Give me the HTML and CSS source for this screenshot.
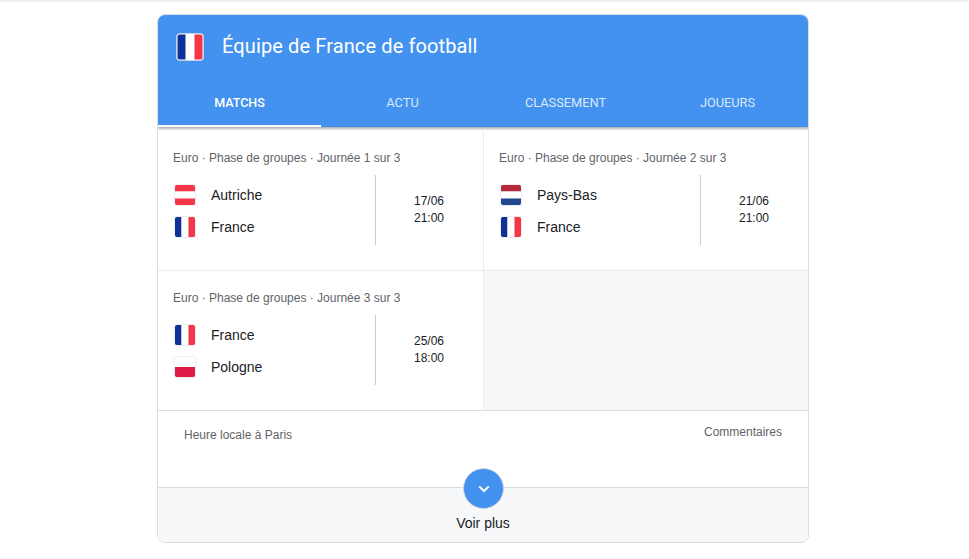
FILE: index.html
```html
<!DOCTYPE html>
<html lang="fr">
<head>
<meta charset="utf-8">
<title>Équipe de France de football</title>
<link rel="stylesheet" href="styles.css">
</head>
<body>
<svg class="defs" width="0" height="0" aria-hidden="true">
  <symbol id="fr" viewBox="0 0 22 22"><rect width="22" height="22" rx="2.5" fill="#eceef1"/><path d="M3 1h4.5v20H3a2 2 0 0 1-2-2V3a2 2 0 0 1 2-2z" fill="#0f3197"/><rect x="7.5" y="1" width="7" height="20" fill="#fff"/><path d="M14.5 1H19a2 2 0 0 1 2 2v16a2 2 0 0 1-2 2h-4.500z" fill="#f43646"/></symbol>
  <symbol id="at" viewBox="0 0 22 22"><rect width="22" height="22" rx="2.5" fill="#eceef1"/><path d="M3 1h16a2 2 0 0 1 2 2v4.500H1V3a2 2 0 0 1 2-2z" fill="#f43646"/><rect x="1" y="7.500" width="20" height="7" fill="#fff"/><path d="M1 14.500h20V19a2 2 0 0 1-2 2H3a2 2 0 0 1-2-2z" fill="#f43646"/></symbol>
  <symbol id="nl" viewBox="0 0 22 22"><rect width="22" height="22" rx="2.5" fill="#eceef1"/><path d="M3 1h16a2 2 0 0 1 2 2v4.500H1V3a2 2 0 0 1 2-2z" fill="#b6283c"/><rect x="1" y="7.500" width="20" height="7" fill="#fff"/><path d="M1 14.500h20V19a2 2 0 0 1-2 2H3a2 2 0 0 1-2-2z" fill="#24488f"/></symbol>
  <symbol id="pl" viewBox="0 0 22 22"><rect width="22" height="22" rx="2.5" fill="#eceef1"/><rect x="1" y="1" width="20" height="10" fill="#fff"/><path d="M1 11h20v8a2 2 0 0 1-2 2H3a2 2 0 0 1-2-2z" fill="#dc1a45"/></symbol>
</svg>
<div class="topshade"></div>
<main class="card">
  <header class="head">
    <div class="title-row">
      <svg class="head-flag" viewBox="0 0 28 28"><rect x=".5" y=".5" width="27" height="27" rx="3.500" fill="#fff" stroke="#c3d5ee"/><path d="M4 1.500h5.500v25H4A2.500 2.500 0 0 1 1.500 24V4A2.500 2.500 0 0 1 4 1.500z" fill="#0f3197"/><path d="M18.500 1.500H24A2.500 2.500 0 0 1 26.500 4v20a2.500 2.500 0 0 1-2.500 2.500h-5.500z" fill="#f43646"/></svg>
      <h1 class="title">Équipe de France de football</h1>
    </div>
    <nav class="tabs">
      <a class="tab tab-on">MATCHS</a>
      <a class="tab">ACTU</a>
      <a class="tab">CLASSEMENT</a>
      <a class="tab">JOUEURS</a>
    </nav>
  </header>
  <section class="grid">
    <article class="match">
      <p class="meta">Euro · Phase de groupes · Journée 1 sur 3</p>
      <div class="body">
        <div class="teams">
          <div class="team"><svg class="flag"><use href="#at"/></svg><span>Autriche</span></div>
          <div class="team"><svg class="flag"><use href="#fr"/></svg><span>France</span></div>
        </div>
        <div class="when">17/06<br>21:00</div>
      </div>
    </article>
    <article class="match match-right">
      <p class="meta">Euro · Phase de groupes · Journée 2 sur 3</p>
      <div class="body">
        <div class="teams">
          <div class="team"><svg class="flag"><use href="#nl"/></svg><span>Pays-Bas</span></div>
          <div class="team"><svg class="flag"><use href="#fr"/></svg><span>France</span></div>
        </div>
        <div class="when">21/06<br>21:00</div>
      </div>
    </article>
    <article class="match match-low">
      <p class="meta">Euro · Phase de groupes · Journée 3 sur 3</p>
      <div class="body">
        <div class="teams">
          <div class="team"><svg class="flag"><use href="#fr"/></svg><span>France</span></div>
          <div class="team"><svg class="flag"><use href="#pl"/></svg><span>Pologne</span></div>
        </div>
        <div class="when">25/06<br>18:00</div>
      </div>
    </article>
    <div class="empty"></div>
  </section>
  <div class="notes">
    <span class="local">Heure locale à Paris</span>
    <span class="comments">Commentaires</span>
  </div>
  <footer class="more">
    <span class="more-btn"><svg viewBox="0 0 12 8" width="12" height="8"><path d="M1.200 1.400 6 6l4.800-4.600" fill="none" stroke="#fff" stroke-width="2"/></svg></span>
    <span class="more-label">Voir plus</span>
  </footer>
</main>
</body>
</html>
```

FILE: styles.css
```css
* { box-sizing: border-box; }
html, body { margin: 0; padding: 0; background: #fff; }
body { font-family: "Liberation Sans", Arial, sans-serif; color: #202124; height: 559px; overflow: hidden; position: relative; padding-top: 14px; }
.defs { position: absolute; }
.topshade { position: absolute; top: 0; left: 0; right: 0; height: 3px; background: linear-gradient(#ececec, #fff); }
.card { width: 652px; height: 529px; margin-left: 157px; border: 1px solid #dadce0; border-radius: 8px; overflow: hidden; display: flex; flex-direction: column; position: relative; }
.head { background: #4392ef; height: 112px; flex: none; display: flex; flex-direction: column; color: #fff; box-shadow: 0 2px 2px rgba(0,0,0,.3); position: relative; z-index: 1; }
.title-row { height: 64px; flex: none; display: flex; align-items: center; padding-left: 18px; gap: 18px; }
.head-flag { width: 28px; height: 28px; flex: none; }
.title { margin: -3px 0 0; font: 400 20px/26px "Roboto", sans-serif; color: #fff; letter-spacing: .12px; }
.tabs { display: grid; grid-template-columns: 163px 163px 163px 1fr; flex: 1; }
.tab { display: flex; align-items: center; justify-content: center; font: 400 12.800px/16px "Roboto", sans-serif; color: rgba(255,255,255,.82); }
.tab-on { color: #fff; font-weight: 500; font-size: 12.500px; border-bottom: 2px solid #fff; padding-top: 2px; }
.grid { display: grid; flex: none; grid-template-columns: 326px 1fr; grid-template-rows: 140px 140px; margin-top: 4px; }
.match { padding: 20px 0 0 15px; border-bottom: 1px solid #ebebeb; border-right: 1px solid #ebebeb; }
.match-right { border-right: 0; padding-left: 15px; }
.match-low { border-bottom: 1px solid #dadce0; }
.empty { background: #f8f8f9; border-bottom: 1px solid #dadce0; }
.meta { margin: 0; font-size: 12px; line-height: 14px; color: #5f6368; }
.body { display: flex; margin-top: 10px; height: 70px; }
.teams { width: 203px; flex: none; display: flex; flex-direction: column; justify-content: center; gap: 10px; padding-top: 2px; }
.team { display: flex; align-items: center; gap: 15px; font-size: 14px; height: 22px; color: #202124; margin-left: 1px; }
.flag { width: 22px; height: 22px; flex: none; }
.when { border-left: 1px solid #ccc; flex: 1; margin-left: -1px; display: flex; align-items: center; justify-content: center; text-align: center; font-size: 12px; line-height: 17px; padding: 0 1px 1px 0; }
.match-right .when { margin-left: -2px; }
.notes { height: 77px; flex: none; display: flex; justify-content: space-between; padding: 14px 26px 0 26px; font-size: 12px; color: #5f6368; border-bottom: 1px solid #dadce0; }
.local { margin-top: 3px; }
.more { flex: 1; background: #f7f8fa; display: flex; flex-direction: column; align-items: center; position: relative; }
.more-btn { position: absolute; top: -20px; left: 50%; margin-left: -20px; width: 41px; height: 41px; border-radius: 50%; background: #4392ef; border: 1px solid #d5d8dd; display: flex; align-items: center; justify-content: center; }
.more-label { margin-top: 27px; font-size: 14px; line-height: 16px; }
```
